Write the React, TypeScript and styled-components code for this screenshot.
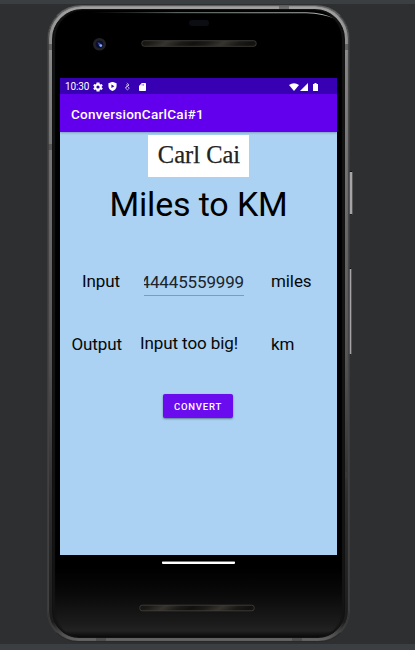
import React from "react";
import styled, { createGlobalStyle } from "styled-components";

const GlobalStyle = createGlobalStyle`
  * { box-sizing: border-box; }
  html, body { margin: 0; padding: 0; overflow: hidden; background: #2d2f31; }
  body { font-family: Roboto, "Liberation Sans", sans-serif; }
`;

const Desk = styled.div`
  width: 415px;
  height: 650px;
  display: flex;
  flex-direction: column;
  background: #2d2f31;
`;

const PanelEdge = styled.div<{ $height: number }>`
  height: ${(p) => p.$height}px;
  flex: none;
  background: #3c3f41;
`;

const Workspace = styled.div`
  flex: 1;
  min-height: 0;
  padding: 1px 0 0 47px;
`;

const Phone = styled.div`
  position: relative;
  width: 303px;
  height: 637px;
  padding: 3px 4px 3px 4px;
  border-radius: 34px 34px 31px 31px;
  border: 1px solid;
  border-color: #5c5c5c #3c3c3c #29292a #3c3c3c;
  background: linear-gradient(180deg, #a2a2a2 0%, #858585 9%, #6d6d6d 30%, #555 55%, #2d2d2d 78%, #1c1c1c 97%, #6a6a6a 100%);
  box-shadow: inset 1px 0 1px #444, inset -1px 0 1px #444;
`;

const Face = styled.div`
  height: 100%;
  display: flex;
  flex-direction: column;
  padding: 0 8px;
  border-radius: 30px 30px 27px 27px;
  border: 1px solid #111;
  background: linear-gradient(180deg, #000 0%, #000 89%, #090909 93%, #1c1c1c 98%, #222 99%, #090909 100%);
  box-shadow: inset 2px 0 1px #141414, inset -2px 0 1px #141414;
`;

const TopBezel = styled.div`
  height: 68px;
  flex: none;
`;

const BottomBezel = styled.div`
  flex: 1;
  display: flex;
  flex-direction: column;
  align-items: center;
`;

const HomeBar = styled.div`
  width: 73px;
  height: 3px;
  margin-top: 6px;
  background: linear-gradient(#777 0 1px, #fff 1px);
  border-radius: 1px;
`;

const BottomSpeaker = styled.div`
  margin: 40px 3px 0 0;
  height: 8px;
  display: flex;
`;

const SideButton = styled.div<{ $top: number; $height: number; $width: number }>`
  position: absolute;
  left: 301px;
  top: ${(p) => p.$top}px;
  width: ${(p) => p.$width}px;
  height: ${(p) => p.$height}px;
  border: 1px solid #565656;
  border-top-color: #111;
  border-bottom-color: #222;
  border-radius: 0 1px 1px 0;
  background: #a5a5a5;
`;

const AntennaBand = styled.div<{ $left: number; $top: number; $wide?: boolean }>`
  position: absolute;
  left: ${(p) => p.$left}px;
  top: ${(p) => p.$top}px;
  width: ${(p) => (p.$wide ? 10 : 4)}px;
  height: ${(p) => (p.$wide ? 3 : 6)}px;
  background: rgba(60, 60, 60, 0.5);
`;

const Screen = styled.div`
  width: 277px;
  height: 477px;
  flex: none;
  margin-left: -1px;
  display: flex;
  flex-direction: column;
  background: #abd2f2;
`;

const StatusBar = styled.div`
  height: 16px;
  flex: none;
  display: flex;
  align-items: center;
  justify-content: space-between;
  padding: 1px 19px 0 5px;
  background: #3700b3;
  color: #fff;
`;

const StatusGroup = styled.div`
  display: flex;
  align-items: center;
`;

const Clock = styled.span`
  width: 28px;
  font-size: 10px;
  line-height: 14px;
  letter-spacing: -0.15px;
`;

const AppBar = styled.div`
  height: 38px;
  flex: none;
  display: flex;
  align-items: center;
  padding: 1px 0 0 11px;
  background: #6200ee;
  color: #fff;
  font-size: 13.5px;
  font-weight: 500;
  letter-spacing: 0.27px;
  box-shadow: 0 1px 2px rgba(40, 60, 90, 0.35);
`;

const Content = styled.div`
  flex: 1;
  display: flex;
  flex-direction: column;
  align-items: center;
`;

const NameCard = styled.div`
  width: 101px;
  height: 42px;
  margin-top: 3px;
  padding-left: 1px;
  background: #fff;
  color: #222;
  text-align: center;
  font-family: "Liberation Serif", serif;
  font-size: 24.5px;
  line-height: 40px;
  -webkit-text-stroke: 0.25px #222;
`;

const Title = styled.h1`
  margin: 7px 0 0;
  font-size: 34px;
  line-height: 40px;
  font-weight: 400;
  letter-spacing: -0.15px;
  color: #000;
  white-space: nowrap;
`;

const Row = styled.div<{ $gap: number }>`
  width: 277px;
  height: 26px;
  margin-top: ${(p) => p.$gap}px;
  display: grid;
  grid-template-columns: 62px 22px 100px 27px 1fr;
  font-size: 17px;
  line-height: 26px;
  letter-spacing: -0.1px;
  color: #050708;
  white-space: nowrap;
`;

const Label = styled.label<{ $inset?: number }>`
  text-align: right;
  padding-right: ${(p) => p.$inset ?? 0}px;
`;

const Field = styled.div`
  grid-column: 3;
  height: 28px;
  display: flex;
  justify-content: flex-end;
  overflow: hidden;
  line-height: 29px;
  letter-spacing: -0.15px;
  color: #1c252b;
  border-bottom: 1px solid #14cfc6;
`;

const Result = styled.output`
  grid-column: 3;
  margin-left: -4px;
  line-height: 24px;
`;

const Unit = styled.span`
  grid-column: 5;
`;

const ConvertButton = styled.button`
  width: 70px;
  height: 24px;
  margin: 37px 0 0 -1px;
  padding: 1px 0 0 0;
  border: 0;
  border-radius: 2px;
  background: #6a0cee;
  color: #fff;
  font: 500 9.5px Roboto, "Liberation Sans", sans-serif;
  letter-spacing: 0.8px;
  box-shadow: 0 1px 2px rgba(20, 40, 70, 0.5);
`;

const StatusIcon = styled.svg<{ $gap?: number }>`
  display: block;
  fill: #fff;
  margin-left: ${(p) => p.$gap ?? 0}px;
`;

const SpeakerGrille = ({ id }: { id: string }) => (
  <svg width="116" height="8" viewBox="0 0 116 8">
    <defs>
      <linearGradient id={id} gradientUnits="userSpaceOnUse" x1="0" y1="0" x2="11" y2="14" spreadMethod="reflect">
        <stop offset="0" stopColor="#11110f" />
        <stop offset=".45" stopColor="#1b1a17" />
        <stop offset="1" stopColor="#37342e" />
      </linearGradient>
    </defs>
    <rect x=".8" y="1.2" width="114.4" height="5.6" rx="2.4" fill={`url(#${id})`} stroke="#46443f" strokeWidth=".8" />
  </svg>
);

const BezelHardware = () => (
  <svg width="277" height="68" viewBox="0 0 277 68">
    <defs>
      <linearGradient id="shine" x1="0" x2="1">
        <stop offset="0" stopColor="#53605a" stopOpacity="0" />
        <stop offset=".35" stopColor="#75817b" />
        <stop offset="1" stopColor="#b0b8b4" />
      </linearGradient>
    </defs>
    <path d="M30 2.200 245 2.200Q263 2.500 273 8.500Q263 4 245 3.300L30 3Z" fill="url(#shine)" />
    <rect x="128" y="10" width="20" height="6" rx="3" fill="#0b0d12" />
    <ellipse cx="38.5" cy="34.3" rx="6.4" ry="6.3" fill="#222226" />
    <circle cx="38.5" cy="34.3" r="3.8" fill="#0b0e2c" />
    <path d="M36.500 32.200 39 33 40.800 35.800 38 35.500Z" fill="#344cae" />
    <circle cx="39.8" cy="35.6" r="1.4" fill="#88a7ff" />
    <g transform="translate(80 29.500)">
      <SpeakerGrille id="grille-top" />
    </g>
  </svg>
);

export default function App() {
  return (
    <>
      <GlobalStyle />
      <Desk>
        <PanelEdge $height={4} />
        <Workspace>
          <Phone>
            <Face>
              <TopBezel>
                <BezelHardware />
              </TopBezel>
              <Screen>
                <StatusBar>
                  <StatusGroup>
                    <Clock>10:30</Clock>
                    <StatusIcon width="10" height="10" viewBox="2 2 20 20">
                      <path fillRule="evenodd" d="M19.4 13a7.8 7.8 0 0 0 0-2l2.1-1.7-2-3.4-2.5 1a7.3 7.3 0 0 0-1.7-1L15 3.2H9l-.4 2.7a7.3 7.3 0 0 0-1.7 1l-2.5-1-2 3.4L4.6 11a7.8 7.8 0 0 0 0 2l-2.1 1.7 2 3.4 2.5-1a7.3 7.3 0 0 0 1.7 1l.4 2.7h6l.3-2.7a7.3 7.3 0 0 0 1.7-1l2.5 1 2-3.4ZM12 15.2a3.2 3.2 0 1 1 0-6.4 3.2 3.2 0 0 1 0 6.4Z" />
                    </StatusIcon>
                    <StatusIcon $gap={5} width="9" height="9" viewBox="2 1.500 20 21">
                      <path fillRule="evenodd" d="M12 1 2.500 4.500v6.500c0 5.500 4.300 10.200 9.500 11.500 5.200-1.300 9.500-6 9.500-11.500V4.500ZM9.500 7.500 16.500 11.500 9.500 15.500Z" />
                    </StatusIcon>
                    <StatusIcon $gap={7} width="7" height="9" viewBox="0 0 7 9">
                      <path d="M3 .8 5 3 2 5.200M5 3.500 2 2.800M1.500 5.500 3.500 4.500 5.300 6.200 3.500 7.800 1.800 6.500Z" fill="none" stroke="#d6cbea" strokeWidth=".8" />
                    </StatusIcon>
                    <StatusIcon $gap={8} width="7" height="8" viewBox="0 0 7 8">
                      <path fillRule="evenodd" d="M2.800 0H6.300Q7 0 7 .8V7.200Q7 8 6.200 8H.8Q0 8 0 7.200V3ZM2.800 1.200V2.400H3.400V1.200ZM4.300 1.200V2.400H4.900V1.200Z" />
                    </StatusIcon>
                  </StatusGroup>
                  <StatusGroup>
                    <StatusIcon width="10" height="8" viewBox="0 0 10 8">
                      <path d="M0 2Q5-1.700 10 2L5 8Z" />
                    </StatusIcon>
                    <StatusIcon $gap={1} width="8" height="8" viewBox="0 0 8 8">
                      <path d="M0 8 8 0V8Z" />
                    </StatusIcon>
                    <StatusIcon $gap={5} width="5" height="8" viewBox="0 0 5 8">
                      <path d="M0 1H1.500V0H3.500V1H5V8H0Z" />
                    </StatusIcon>
                  </StatusGroup>
                </StatusBar>
                <AppBar>ConversionCarlCai#1</AppBar>
                <Content>
                  <NameCard>Carl Cai</NameCard>
                  <Title>Miles to KM</Title>
                  <Row $gap={44}>
                    <Label $inset={2}>Input</Label>
                    <Field>44445559999</Field>
                    <Unit>miles</Unit>
                  </Row>
                  <Row $gap={37}>
                    <Label>Output</Label>
                    <Result>Input too big!</Result>
                    <Unit>km</Unit>
                  </Row>
                  <ConvertButton>CONVERT</ConvertButton>
                </Content>
              </Screen>
              <BottomBezel>
                <HomeBar />
                <BottomSpeaker>
                  <SpeakerGrille id="grille-bottom" />
                </BottomSpeaker>
              </BottomBezel>
            </Face>
            <AntennaBand $left={0} $top={38} />
            <AntennaBand $left={0} $top={138} />
            <AntennaBand $left={297} $top={38} />
            <AntennaBand $left={297} $top={466} />
            <AntennaBand $left={231} $top={0} $wide />
            <AntennaBand $left={48} $top={632} $wide />
            <AntennaBand $left={244} $top={632} $wide />
            <SideButton $top={165} $height={44} $width={4} />
            <SideButton $top={262} $height={87} $width={3} />
          </Phone>
        </Workspace>
        <PanelEdge $height={6} />
      </Desk>
    </>
  );
}
